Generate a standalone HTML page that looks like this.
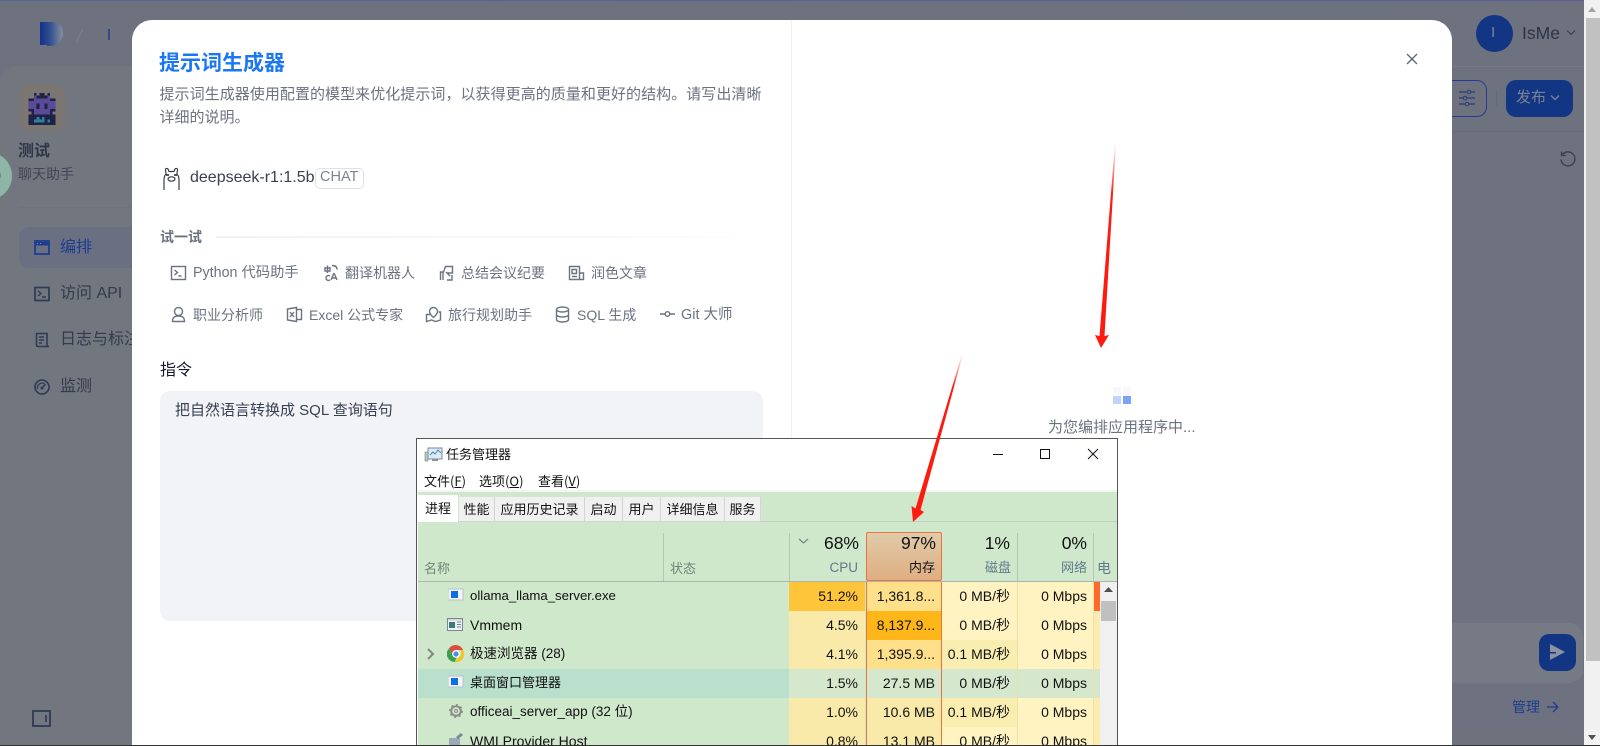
<!DOCTYPE html>
<html lang="zh"><head><meta charset="utf-8"><title>提示词生成器</title>
<style>
html,body{margin:0;padding:0;width:1600px;height:746px;overflow:hidden;background:#6e727e}
body{position:relative;font-family:"Liberation Sans","Noto Sans CJK SC",sans-serif}
div,svg{position:absolute}
.t{position:absolute;white-space:nowrap;line-height:20px;margin-top:-10px}
.r{transform:translateX(-100%)}
.c{position:absolute}
.m{font-size:14px;color:#6b7280}
.n{font-size:16px;color:#323b4d}
.k{font-size:14px;color:#111}
.s{font-size:14px;color:#111;font-family:"Liberation Sans","Noto Sans CJK SC",sans-serif}
.tab{position:absolute;top:497px;height:24px;background:#f0f0f0;border-right:1px solid #d4d4d4;border-bottom:1px solid #d4d4d4;font-size:13px;line-height:24px;text-align:center;color:#111;font-family:"Noto Sans CJK SC",sans-serif}
svg.i{fill:none;stroke:#6b7280;stroke-width:1.4}
</style></head><body>
<!-- page backdrop -->
<div style="left:0;top:0;width:1584px;height:1px;background:linear-gradient(90deg,#4f6898,#5a5f9c)"></div>
<svg style="left:38px;top:20px" width="30" height="28"><defs><linearGradient id="lg" x1="0" x2="1"><stop offset="0" stop-color="#12308a"/><stop offset=".45" stop-color="#33508f"/><stop offset="1" stop-color="#868ea2"/></linearGradient></defs><path d="M2 2h11c8 0 12 5 12 11s-4 13-12 13h-4v-1H2z" fill="url(#lg)"/></svg>
<svg style="left:74px;top:26px" width="40" height="20"><path d="M2 17L9 3" stroke="#7d818c" stroke-width="1"/><path d="M35 3v11" stroke="#1f3d8e" stroke-width="1.5"/></svg>
<!-- sidebar -->
<div style="left:0;top:66px;width:160px;height:680px;background:#72767f;border-radius:18px 0 0 0"></div>
<div style="left:19px;top:84px;width:46px;height:47px;border-radius:10px;background:#7b7672"></div>
<svg style="left:26px;top:93px" width="32" height="32" viewBox="0 0 12 12" shape-rendering="crispEdges">
<path fill="#1d2344" d="M3 0h1v1h1V0h2v1h1V0h1v2h2v5h-1v1h1v4H1V8h1V7H1V2h2z"/>
<path fill="#5b4a97" d="M3 1h1v1h4V1h1v2h2v3H9v2H3V6H1V3h2z"/>
<path fill="#1d2344" d="M4 4h1v2H4zM7 4h1v2H7z"/>
<path fill="#2e7f98" d="M3 10h1V9h1v2H3zM6 9h1v2H6zM8 10h1v1H8zM5 10h1v1H5z"/>
</svg>
<div class="t" style="left:18px;top:152px;font-size:16px;font-weight:700;color:#2f3747">测试</div>
<div class="t" style="left:18px;top:174px;font-size:14px;color:#3f4655">聊天助手</div>
<div style="left:-36px;top:152px;width:48px;height:48px;border-radius:50%;background:#8db6a9"></div>
<div class="t" style="left:-6px;top:176px;font-size:13px;color:#5c7f75">0</div>
<div style="left:19px;top:207px;width:113px;height:1px;background:#6e727c"></div>
<div style="left:19px;top:227px;width:130px;height:41px;border-radius:10px;background:#6a7082"></div>
<svg style="left:33px;top:239px" width="18" height="18"><rect x="2" y="2" width="14" height="13" fill="none" stroke="#1d3d8f" stroke-width="1.8"/><path d="M2 3h14v3.500H2z" fill="#1d3d8f"/><path d="M4 4.500h1M7 4.500h1" stroke="#7b86a0"/></svg>
<div class="t n" style="left:60px;top:248px;color:#1d3d8f">编排</div>
<svg style="left:33px;top:285px" width="18" height="18"><rect x="2" y="2.500" width="14" height="13" fill="none" stroke="#2f3a55" stroke-width="1.700"/><path d="M5 6l3 2.500L5 11M9 12h4" fill="none" stroke="#2f3a55" stroke-width="1.400"/></svg>
<div class="t n" style="left:60px;top:294px">访问 API</div>
<svg style="left:33px;top:331px" width="18" height="18"><path d="M14 14V2.500H3.500V14c0 1 .6 1.500 1.500 1.500h11c-1 0-2-.5-2-1.500zM6 6h5M6 9h5M6 12h3" fill="none" stroke="#2f3a55" stroke-width="1.600"/></svg>
<div class="t n" style="left:60px;top:340px">日志与标注</div>
<svg style="left:33px;top:378px" width="18" height="18"><circle cx="9" cy="9" r="7" fill="none" stroke="#2f3a55" stroke-width="1.600"/><path d="M4.500 11a5 5 0 0 1 7-5.500" fill="none" stroke="#2f3a55" stroke-width="1.200"/><circle cx="9" cy="10" r="1.500" fill="#2f3a55"/><path d="M9 10l3.500-4" stroke="#2f3a55" stroke-width="1.500"/></svg>
<div class="t n" style="left:60px;top:387px">监测</div>
<svg style="left:32px;top:710px" width="19" height="17"><rect x="1" y="1" width="17" height="15" fill="none" stroke="#2f3a55" stroke-width="1.800"/><path d="M14 5v7" stroke="#2f3a55" stroke-width="1.600"/></svg>
<!-- right backdrop -->
<div style="left:1452px;top:66px;width:132px;height:1px;background:#757984"></div>
<div style="left:1452px;top:131px;width:132px;height:1px;background:#666a76"></div>
<div style="left:1476px;top:15px;width:37px;height:37px;border-radius:50%;background:#123684"></div>
<div class="t" style="left:1491px;top:33px;font-size:15px;color:#7a8498">I</div>
<div class="t" style="left:1522px;top:33px;font-size:17.500px;color:#2c3444">IsMe</div>
<svg style="left:1566px;top:29px" width="10" height="8"><path d="M1 1.500l4 4 4-4" fill="none" stroke="#3f4655" stroke-width="1.300"/></svg>
<div style="left:1440px;top:80px;width:45px;height:35px;border:1px solid #2a3a94;border-radius:10px"></div>
<svg style="left:1458px;top:89px" width="18" height="18"><path d="M1 3h16M1 9h16M1 15h16" stroke="#2a3a7a" stroke-width="1.300"/><circle cx="11" cy="3" r="1.800" fill="#6e727e" stroke="#2a3a7a"/><circle cx="7" cy="9" r="1.800" fill="#6e727e" stroke="#2a3a7a"/><circle cx="9" cy="15" r="1.800" fill="#6e727e" stroke="#2a3a7a"/></svg>
<div style="left:1496px;top:90px;width:1px;height:16px;background:#666a76"></div>
<div style="left:1506px;top:80px;width:67px;height:37px;border-radius:10px;background:#123684"></div>
<div class="t" style="left:1516px;top:98px;font-size:15px;color:#7a8293">发布</div>
<svg style="left:1550px;top:94px" width="10" height="7"><path d="M1 1.500l4 4 4-4" fill="none" stroke="#7a8293" stroke-width="1.400"/></svg>
<svg style="left:1559px;top:150px" width="18" height="18"><path d="M3.500 4.500A7 7 0 1 1 2 9.500M2.500 1.500v4h4" fill="none" stroke="#3a4150" stroke-width="1.400"/></svg>
<div style="left:1440px;top:623px;width:143px;height:60px;background:#767a84;border-radius:0 14px 14px 0"></div>
<div style="left:1539px;top:634px;width:37px;height:37px;border-radius:10px;background:#123684"></div>
<svg style="left:1549px;top:642px" width="18" height="20"><path d="M1 2l15 8-15 8v-6.500h6v-1.500H1z" fill="#8d93a0"/></svg>
<div style="left:1440px;top:683px;width:142px;height:48px;background:#6e7280;border-radius:0 0 14px 0"></div>
<div class="t" style="left:1512px;top:707px;font-size:14px;color:#1d3d8f">管理</div>
<svg style="left:1546px;top:700px" width="14" height="14"><path d="M1 7h11M7 2l5 5-5 5" fill="none" stroke="#1d3d8f" stroke-width="1.300"/></svg>
<!-- page scrollbar -->
<div style="left:1584px;top:0;width:16px;height:746px;background:#f1f1f1"></div>
<div style="left:1586px;top:18px;width:14px;height:643px;background:#c1c1c1"></div>
<svg style="left:1588px;top:7px" width="8" height="6"><path d="M4 0l4 5H0z" fill="#a3a3a3"/></svg>
<svg style="left:1588px;top:735px" width="8" height="6"><path d="M0 0h8L4 5z" fill="#505050"/></svg>
<!-- modal -->
<div style="left:132px;top:20px;width:1320px;height:730px;background:#fff;border-radius:20px 20px 0 0"></div>
<div style="left:791px;top:20px;width:1px;height:726px;background:#f0f1f3"></div>
<div class="t" style="left:159px;top:64px;font-size:21px;font-weight:700;color:#1c78f2">提示词生成器</div>
<div class="t" style="left:159.500px;top:95px;font-size:15px;letter-spacing:.05px;color:#6b7280">提示词生成器使用配置的模型来优化提示词，以获得更高的质量和更好的结构。请写出清晰</div>
<div class="t" style="left:159.500px;top:118px;font-size:15px;color:#6b7280">详细的说明。</div>
<svg style="left:161px;top:166px" width="21" height="25" fill="none" stroke="#3a3f48" stroke-width="1.200"><path d="M3 24V14c0-3 1-5 2-6 0-2-.5-3-.5-4.500C4.500 2 7 2 7.500 4c0 .5 0 1 .5 1.500h5c.5-.5.5-1 .5-1.500.5-2 3-2 3-.5 0 1.500-.5 2.500-.5 4.500 1 1 2 3 2 6v10"/><ellipse cx="10.500" cy="13" rx="3.500" ry="2.200"/><path d="M5 9h3M13 9h3" stroke-width="1.800"/></svg>
<div class="t" style="left:190px;top:178px;font-size:16px;color:#374151">deepseek-r1:1.5b</div>
<div style="left:315px;top:168px;width:47px;height:19px;border:1px solid #dfe1e6;border-radius:5px"></div>
<div class="t" style="left:320px;top:177px;font-size:14.500px;color:#7d8490">CHAT</div>
<div class="t" style="left:160px;top:237px;font-size:14px;font-weight:700;color:#6b7280">试一试</div>
<div style="left:216px;top:236px;width:550px;height:2px;background:linear-gradient(90deg,#f1f2f4,#f7f8f9 70%,#fff)"></div>
<!-- row 1 -->
<svg class="i" style="left:170px;top:265px" width="17" height="16"><rect x="1.500" y="1.500" width="14" height="13"/><path d="M4.500 5l3 2.500-3 2.500M8.500 11h3"/></svg>
<div class="t m" style="left:193px;top:273px;font-size:14.300px">Python 代码助手</div>
<svg class="i" style="left:323px;top:264px" width="17" height="18"><path d="M1.500 4h6M4.500 1.500V9M2 3v4h5V3M7 12c-2-1-4 0-4 2s2 3 4 2M9 1.500c3 0 5 1 5 4M11 9l-3 7M11 9l3 7M9 14h4.500"/></svg>
<div class="t m" style="left:345px;top:273px;font-size:14px">翻译机器人</div>
<svg class="i" style="left:439px;top:265px" width="15" height="16"><path d="M1.500 15V7h3l2-5.500h7V8l-5 0M13 10v5H8M4 7v8M7 7l4 4"/></svg>
<div class="t m" style="left:461px;top:273px;font-size:14px">总结会议纪要</div>
<svg class="i" style="left:568px;top:265px" width="17" height="16"><path d="M1.500 1.500h10v13h-10zM11.500 8h4v6.500h-4M4 4.500h4.500v4H4zM4 11.500h5"/></svg>
<div class="t m" style="left:591px;top:273px;font-size:14px">润色文章</div>
<!-- row 2 -->
<svg class="i" style="left:171px;top:306px" width="15" height="17"><circle cx="7.500" cy="5.500" r="4"/><path d="M1.500 15.500c0-4 2-5.500 6-5.500s6 1.500 6 5.500z"/></svg>
<div class="t m" style="left:193px;top:315px;font-size:14px">职业分析师</div>
<svg class="i" style="left:286px;top:306px" width="17" height="17"><path d="M1.500 3l9-1.500v14l-9-1.500zM10.500 3.500h5v10h-5M4 6l4 5M8 6l-4 5"/></svg>
<div class="t m" style="left:309px;top:315px;font-size:14px">Excel 公式专家</div>
<svg class="i" style="left:425px;top:306px" width="17" height="17"><path d="M5 8.500H1.500v7l5-1.500 4 1.500 5-1.500v-8h-2"/><path d="M8.500 1.500c-2.500 0-4 2-4 4 0 2.500 4 6 4 6s4-3.500 4-6c0-2-1.500-4-4-4z"/></svg>
<div class="t m" style="left:448px;top:315px;font-size:14px">旅行规划助手</div>
<svg class="i" style="left:555px;top:306px" width="15" height="17"><ellipse cx="7.500" cy="3.500" rx="6" ry="2.500"/><path d="M1.500 3.500v10c0 1.500 2.500 2.500 6 2.500s6-1 6-2.500v-10M1.500 8.500c0 1.500 2.500 2.500 6 2.500s6-1 6-2.500"/></svg>
<div class="t m" style="left:577px;top:315px;font-size:14px">SQL 生成</div>
<svg class="i" style="left:660px;top:308px" width="15" height="12"><circle cx="7.500" cy="6" r="2.300"/><path d="M0 6h5M10 6h5"/></svg>
<div class="t m" style="left:681px;top:315px;font-size:14.500px">Git 大师</div>
<div class="t" style="left:160px;top:371px;font-size:16px;color:#111827">指令</div>
<div style="left:160px;top:391px;width:603px;height:230px;border-radius:10px;background:#f2f3f6"></div>
<div class="t" style="left:175px;top:411px;font-size:15px;color:#374151">把自然语言转换成 SQL 查询语句</div>
<svg style="left:1406px;top:53px" width="12" height="12"><path d="M1 1l10 10M11 1L1 11" stroke="#5f6877" stroke-width="1.400"/></svg>
<div style="left:1113px;top:387px;width:8px;height:8px;background:#f6f8fe"></div>
<div style="left:1123px;top:387px;width:8px;height:8px;background:#f6f8fe"></div>
<div style="left:1113px;top:396px;width:8px;height:8px;background:#c0d4fb"></div>
<div style="left:1123px;top:396px;width:8px;height:8px;background:#7ea3f3"></div>
<div class="t" style="left:1048px;top:428px;font-size:15px;color:#6b7280">为您编排应用程序中...</div>
<!-- arrow 1 -->
<svg style="left:0;top:0" width="1600" height="746"><defs><linearGradient id="a1" x1="0" y1="0" x2="0" y2="1"><stop offset="0" stop-color="#ff2a1a" stop-opacity="0"/><stop offset=".25" stop-color="#ff1a10"/><stop offset="1" stop-color="#ff1a10"/></linearGradient></defs>
<path d="M1115 143L1116 143L1104.500 336L1109 335L1101 348L1095 335L1099.500 336z" fill="url(#a1)"/></svg>
<!-- task manager -->
<div style="left:416px;top:438px;width:702px;height:308px;background:#fff;border:1px solid #555;border-bottom:0;box-sizing:border-box"></div>
<svg style="left:424px;top:446px" width="19" height="17"><rect x="4" y="2" width="14" height="11" fill="#dfe9f2" stroke="#7b8a99"/><path d="M6 9l3-3 2 2 3-4 3 3" fill="none" stroke="#3b8ac4"/><rect x="1" y="6" width="3" height="9" fill="#b9c6bd" stroke="#6d8a74" stroke-width=".6"/><rect x="8" y="13" width="6" height="2" fill="#8a949c"/></svg>
<div class="t" style="left:446px;top:454px;font-size:13px;color:#111;font-family:'Noto Sans CJK SC',sans-serif">任务管理器</div>
<svg style="left:990px;top:444px" width="110" height="20"><path d="M3 10.500h10" stroke="#111"/><rect x="50.500" y="5.500" width="9" height="9" fill="none" stroke="#111"/><path d="M98 5l10 10M108 5L98 15" stroke="#111"/></svg>
<div class="t" style="left:424px;top:481px;font-size:13px;color:#111;font-family:'Noto Sans CJK SC',sans-serif">文件(<u>F</u>)</div>
<div class="t" style="left:479px;top:481px;font-size:13px;color:#111;font-family:'Noto Sans CJK SC',sans-serif">选项(<u>O</u>)</div>
<div class="t" style="left:538px;top:481px;font-size:13px;color:#111;font-family:'Noto Sans CJK SC',sans-serif">查看(<u>V</u>)</div>
<div style="left:417px;top:490px;width:700px;height:2px;background:#f3f5f3"></div>
<div style="left:418px;top:492px;width:699px;height:254px;background:#cfe8cb"></div>
<div style="left:418px;top:521px;width:699px;height:1px;background:#c3cfc2"></div>
<div style="left:418px;top:495px;width:40px;height:27px;background:#fff;font-size:13px;line-height:26px;text-align:center;color:#111;font-family:'Noto Sans CJK SC',sans-serif">进程</div>
<div class="tab" style="left:459px;width:35px">性能</div>
<div class="tab" style="left:495px;width:89px">应用历史记录</div>
<div class="tab" style="left:585px;width:37px">启动</div>
<div class="tab" style="left:623px;width:37px">用户</div>
<div class="tab" style="left:661px;width:63px">详细信息</div>
<div class="tab" style="left:725px;width:35px">服务</div>
<!-- header -->
<div style="left:663px;top:533px;width:1px;height:48px;background:#b5c6b4"></div>
<div style="left:789px;top:533px;width:1px;height:48px;background:#b5c6b4"></div>
<div style="left:1017px;top:533px;width:1px;height:48px;background:#b5c6b4"></div>
<div style="left:1093px;top:533px;width:1px;height:48px;background:#b5c6b4"></div>
<div style="left:866px;top:532px;width:76px;height:49px;box-sizing:border-box;border:1px solid #f07040;border-radius:2px;background:linear-gradient(#e0cba8,#dfae82)"></div>
<div class="t" style="left:424px;top:569px;font-size:13px;color:#6c8579">名称</div>
<div class="t" style="left:670px;top:569px;font-size:13px;color:#6c8579">状态</div>
<svg style="left:798px;top:538px" width="11" height="7"><path d="M1 1l4.500 4L10 1" fill="none" stroke="#6c8a8f" stroke-width="1.200"/></svg>
<div class="t" style="left:859px;top:543px;font-size:17.500px;color:#111;transform:translateX(-100%)">68%</div>
<div class="t" style="left:936px;top:543px;font-size:17.500px;color:#111;transform:translateX(-100%)">97%</div>
<div class="t" style="left:1010px;top:543px;font-size:17.500px;color:#111;transform:translateX(-100%)">1%</div>
<div class="t" style="left:1087px;top:543px;font-size:17.500px;color:#111;transform:translateX(-100%)">0%</div>
<div class="t" style="left:858px;top:568px;font-size:13.500px;color:#5f7a8a;transform:translateX(-100%)">CPU</div>
<div class="t" style="left:935px;top:568px;font-size:13px;color:#111;transform:translateX(-100%)">内存</div>
<div class="t" style="left:1011px;top:568px;font-size:13px;color:#5f7a8a;transform:translateX(-100%)">磁盘</div>
<div class="t" style="left:1087px;top:568px;font-size:13px;color:#5f7a8a;transform:translateX(-100%)">网络</div>
<div class="t" style="left:1097px;top:568px;width:20px;overflow:hidden;font-size:14px;color:#5f7a8a">电</div>
<div style="left:418px;top:581px;width:699px;height:1px;background:#a9b6a9"></div>
<!-- cell backgrounds -->
<div style="left:418px;top:669px;width:371px;height:29px;background:#b9dfcd"></div>
<div style="left:789px;top:582px;width:76px;height:29px;background:#ffc53a"></div>
<div style="left:789px;top:611px;width:76px;height:58px;background:#f9eaa9"></div>
<div style="left:789px;top:669px;width:76px;height:29px;background:#d5e8cd"></div>
<div style="left:789px;top:698px;width:76px;height:48px;background:#f9eaa9"></div>
<div style="left:867px;top:582px;width:74px;height:29px;background:#ffe08a"></div>
<div style="left:867px;top:611px;width:74px;height:29px;background:#ffb619"></div>
<div style="left:867px;top:640px;width:74px;height:29px;background:#ffe08a"></div>
<div style="left:867px;top:669px;width:74px;height:29px;background:#d5e8cd"></div>
<div style="left:867px;top:698px;width:74px;height:48px;background:#f9eaa9"></div>
<div style="left:866px;top:582px;width:1px;height:164px;background:#f07040"></div>
<div style="left:941px;top:582px;width:1px;height:164px;background:#f07040"></div>
<div style="left:942px;top:582px;width:75px;height:58px;background:#fff3c2"></div>
<div style="left:942px;top:640px;width:75px;height:29px;background:#f9edb0"></div>
<div style="left:942px;top:669px;width:75px;height:29px;background:#d5e8cd"></div>
<div style="left:942px;top:698px;width:75px;height:29px;background:#f9edb0"></div>
<div style="left:942px;top:727px;width:75px;height:19px;background:#fff3c2"></div>
<div style="left:1017px;top:582px;width:76px;height:87px;background:#fff3c2"></div>
<div style="left:1017px;top:669px;width:76px;height:29px;background:#d5e8cd"></div>
<div style="left:1017px;top:698px;width:76px;height:48px;background:#fff3c2"></div>
<div style="left:1017px;top:582px;width:1px;height:164px;background:#ecdfa8"></div>
<div style="left:1093px;top:582px;width:1px;height:164px;background:#ecdfa8"></div>
<div style="left:1094px;top:582px;width:6px;height:29px;background:#ff6a2b"></div>
<div style="left:1094px;top:611px;width:6px;height:135px;background:#fdebb0"></div>
<div style="left:1094px;top:669px;width:6px;height:29px;background:#d5e8cd"></div>
<div style="left:1100px;top:582px;width:17px;height:164px;background:#f0f0f0"></div>
<div style="left:1101px;top:601px;width:15px;height:20px;background:#c0c0c0"></div>
<svg style="left:1104px;top:587px" width="9" height="6"><path d="M4.500 0L9 5H0z" fill="#505050"/></svg>
<!-- row icons -->
<svg style="left:448px;top:588px" width="16" height="15"><rect x="0" y="1" width="15" height="11" fill="#f2f4f7" stroke="#b9c2cc"/><rect x="3" y="3" width="7" height="7" fill="#0a6fe0"/></svg>
<svg style="left:447px;top:617px" width="17" height="15"><rect x=".5" y="1.500" width="15" height="12" fill="#eef1f4" stroke="#7b8792"/><rect x="2" y="5" width="6" height="6" fill="#3d7a7a"/><path d="M10 5h4M10 7.500h4M10 10h4" stroke="#7b8792"/><rect x="1" y="2" width="14" height="1.500" fill="#cdd6de"/></svg>
<svg style="left:447px;top:645px" width="18" height="18"><path d="M9 1a8 8 0 0 1 7 4H9z" fill="#dd4b3e"/><path d="M2 3.500A8 8 0 0 1 16 5H9a4 4 0 0 0-4 3.500z" fill="#dd4b3e"/><path d="M2 3.500A8 8 0 0 0 7.500 17L10 12.500a4 4 0 0 1-5-4z" fill="#3ba150"/><path d="M16 5A8 8 0 0 1 7.500 17L12 12a4 4 0 0 0 .5-7z" fill="#f3c41d"/><circle cx="9" cy="9" r="3.200" fill="#4a8cf0" stroke="#fff" stroke-width="1.200"/></svg>
<svg style="left:426px;top:648px" width="9" height="12"><path d="M2 1l5 5-5 5" fill="none" stroke="#7f8a7f" stroke-width="2"/></svg>
<svg style="left:448px;top:675px" width="16" height="15"><rect x="0" y="1" width="15" height="11" fill="#f2f4f7" stroke="#b9c2cc"/><rect x="3" y="3" width="7" height="7" fill="#0a6fe0"/></svg>
<svg style="left:448px;top:703px" width="16" height="16"><circle cx="8" cy="8" r="4.800" fill="none" stroke="#8a8f8a" stroke-width="2"/><circle cx="8" cy="8" r="6.300" fill="none" stroke="#8a8f8a" stroke-width="1.300" stroke-dasharray="2 2.900"/><circle cx="8" cy="8" r="1.500" fill="none" stroke="#8a8f8a"/></svg>
<svg style="left:448px;top:732px" width="16" height="14"><path d="M1 6h11v8H1z" fill="#9ba8b5"/><path d="M8 5l5-4 2 2-5 4z" fill="#7b8792"/></svg>
<!-- row names -->
<div class="t s" style="left:470px;top:596px;font-size:13.200px">ollama_llama_server.exe</div>
<div class="t s" style="left:470px;top:625px">Vmmem</div>
<div class="t s" style="left:470px;top:654px;font-size:13.500px">极速浏览器 (28)</div>
<div class="t s" style="left:470px;top:683px;font-size:13px">桌面窗口管理器</div>
<div class="t s" style="left:470px;top:712px;font-size:13.500px">officeai_server_app (32 位)</div>
<div class="t s" style="left:470px;top:741px">WMI Provider Host</div>
<!-- values -->
<div class="t k r" style="left:858px;top:596px">51.2%</div><div class="t k r" style="left:935px;top:596px;word-spacing:-4px">1,361.8 ...</div><div class="t k r" style="left:1010px;top:596px">0 MB/秒</div><div class="t k r" style="left:1087px;top:596px">0 Mbps</div>
<div class="t k r" style="left:858px;top:625px">4.5%</div><div class="t k r" style="left:935px;top:625px;word-spacing:-4px">8,137.9 ...</div><div class="t k r" style="left:1010px;top:625px">0 MB/秒</div><div class="t k r" style="left:1087px;top:625px">0 Mbps</div>
<div class="t k r" style="left:858px;top:654px">4.1%</div><div class="t k r" style="left:935px;top:654px;word-spacing:-4px">1,395.9 ...</div><div class="t k r" style="left:1010px;top:654px">0.1 MB/秒</div><div class="t k r" style="left:1087px;top:654px">0 Mbps</div>
<div class="t k r" style="left:858px;top:683px">1.5%</div><div class="t k r" style="left:935px;top:683px">27.5 MB</div><div class="t k r" style="left:1010px;top:683px">0 MB/秒</div><div class="t k r" style="left:1087px;top:683px">0 Mbps</div>
<div class="t k r" style="left:858px;top:712px">1.0%</div><div class="t k r" style="left:935px;top:712px">10.6 MB</div><div class="t k r" style="left:1010px;top:712px">0.1 MB/秒</div><div class="t k r" style="left:1087px;top:712px">0 Mbps</div>
<div class="t k r" style="left:858px;top:741px">0.8%</div><div class="t k r" style="left:935px;top:741px">13.1 MB</div><div class="t k r" style="left:1010px;top:741px">0 MB/秒</div><div class="t k r" style="left:1087px;top:741px">0 Mbps</div>
<!-- arrow 2 -->
<svg style="left:0;top:0" width="1600" height="746"><defs><linearGradient id="a2" x1="0" y1="0" x2="0" y2="1"><stop offset="0" stop-color="#ff2a1a" stop-opacity="0"/><stop offset=".2" stop-color="#ff1a10"/><stop offset="1" stop-color="#ff1a10"/></linearGradient></defs>
<path d="M962 354L963 354L920.500 510L924 512L913 522L911.500 506L915.500 508.500z" fill="url(#a2)"/></svg>
<!-- bottom edge -->
<div style="left:0;top:745px;width:1600px;height:1px;background:#333"></div>
</body></html>
